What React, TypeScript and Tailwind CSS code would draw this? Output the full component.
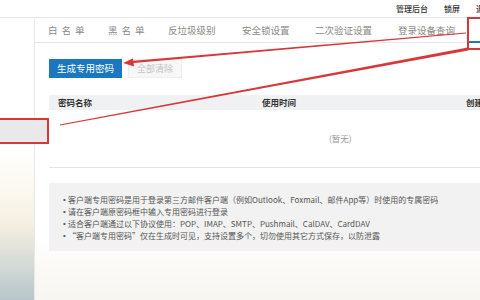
import React from 'react';

const tabs = [
  { label: '白名单', w: 'w-[60px]', spaced: true },
  { label: '黑名单', w: 'w-[60px]', spaced: true },
  { label: '反垃圾级别', w: 'w-[74px]' },
  { label: '安全锁设置', w: 'w-[73px]' },
  { label: '二次验证设置', w: 'w-[83px]' },
  { label: '登录设备查询', w: 'w-[70px]' },
];

const notes = [
  '客户端专用密码是用于登录第三方邮件客户端（例如Outlook、Foxmail、邮件App等）时使用的专属密码',
  '请在客户端原密码框中输入专用密码进行登录',
  '适合客户端通过以下协议使用：POP、IMAP、SMTP、Pushmail、CalDAV、CardDAV',
  '“客户端专用密码”仅在生成时可见，支持设置多个，切勿使用其它方式保存，以防泄露',
];

const App: React.FC = () => {
  return (
    <div
      className="relative w-[480px] h-[300px] overflow-hidden bg-white flex flex-col"
      style={{ fontFamily: '"Noto Sans CJK SC", "Noto Sans", sans-serif' }}
    >
      {/* Top bar */}
      <div className="h-[18px] shrink-0 border-b border-[#e6e6e6] flex items-center justify-end gap-[16px] mr-[-12px] text-[8px] text-[#333] font-medium whitespace-nowrap">
        <span>管理后台</span>
        <span>锁屏</span>
        <span>退出</span>
      </div>

      <div className="flex flex-1 min-h-0">
        {/* Sidebar */}
        <div className="w-[35px] shrink-0 border-r border-[#e8e8e8] bg-[linear-gradient(to_bottom,#ffffff_0%,#ffffff_45%,#fbf8ef_62%,#f3eedf_74%,#d6dbd7_87%,#b8c5ca_100%)]" />

        {/* Main */}
        <div className="flex-1 min-w-0 flex flex-col bg-[linear-gradient(to_bottom,#ffffff_0%,#ffffff_78%,#fbfaf6_88%,#f8f6f1_100%)]">
          {/* Tabs */}
          <div className="h-[25px] shrink-0 border-b border-[#e6e6e6] flex pl-[13px] text-[9.5px] text-[#8a8a8a] whitespace-nowrap">
            {tabs.map(t => (
              <div key={t.label} className={`${t.w} shrink-0 flex items-center`}>
                <span className={t.spaced ? 'tracking-[4px]' : ''}>{t.label}</span>
              </div>
            ))}
            <div className="flex-1 border-b-2 border-[#1a79c0] mb-[-1px]" />
          </div>

          <div className="pl-[14px] flex flex-col">
            {/* Buttons */}
            <div className="mt-[16px] flex gap-[6px]">
              <div className="w-[73px] h-[19px] bg-[#1b78bf] text-white text-[9.5px] flex items-center justify-center">
                生成专用密码
              </div>
              <div className="w-[54px] h-[19px] bg-[#f7f7f7] border border-[#eeeeee] text-[#c4c4c4] text-[9px] flex items-center justify-center">
                全部清除
              </div>
            </div>

            {/* Table */}
            <div className="mt-[17px] h-[15px] bg-[#f0f1f2] flex items-center text-[8.5px] font-bold text-[#333] whitespace-nowrap">
              <span className="w-[213px] shrink-0 pl-[9px]">密码名称</span>
              <span className="w-[204px] shrink-0">使用时间</span>
              <span className="shrink-0">创建时间</span>
            </div>
            <div className="h-[58px] border-b border-[#e4e4e4] flex items-center pl-[280px] text-[8.5px] text-[#999]">
              (暂无)
            </div>

            {/* Notes */}
            <div className="mt-[15px] bg-[#f2f2f2] pt-[11px] pb-[9px] pl-[14px] text-[8px] leading-[12px] text-[#555] whitespace-nowrap">
              {notes.map(n => (
                <div key={n} className="flex">
                  <span className="w-[5px] shrink-0 font-['Liberation_Sans',sans-serif]">•</span>
                  <span>{n}</span>
                </div>
              ))}
            </div>
          </div>
        </div>
      </div>

      {/* Annotation overlays */}
      <div className="absolute left-[-2px] top-[118px] w-[51px] h-[26px] border-2 border-[#d9363a] bg-[#e9e9e9]" />
      <div className="absolute left-[467px] top-[17px] w-[20px] h-[33px] border-2 border-[#d9363a]" />
      <svg className="absolute inset-0 pointer-events-none" width="480" height="300" viewBox="0 0 480 300">
        <polygon points="466,32.4 466,33.6 131,63.3 130.8,60.9" fill="#d9363a" />
        <polygon points="123,63 133,58.5 134,66.5" fill="#d9363a" />
        <polygon points="467.7,47.4 468.3,50.6 60.1,125.5 59.9,124.5" fill="#d9363a" />
      </svg>
    </div>
  );
};

export default App;
